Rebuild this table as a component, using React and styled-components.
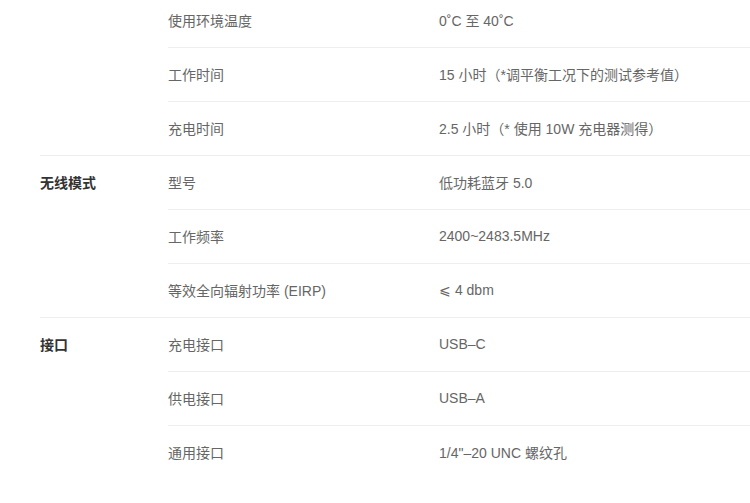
import styled, { createGlobalStyle } from 'styled-components';

const GlobalStyle = createGlobalStyle`
  html, body {
    margin: 0;
    padding: 0;
    background: #fff;
  }
  body {
    font-family: "Liberation Sans", "Noto Sans CJK SC", sans-serif;
    overflow: hidden;
  }
`;

const SpecTable = styled.div`
  margin-top: -6px;
  padding-left: 40px;
`;

const Group = styled.section`
  display: grid;
  grid-template-columns: 128px 1fr;
  border-bottom: ${p => (p.$last ? 'none' : '1px solid #eeeeee')};
`;

const GroupTitle = styled.h3`
  margin: 0;
  height: 53px;
  padding-bottom: 2px;
  box-sizing: border-box;
  display: flex;
  align-items: center;
  font-size: 14px;
  font-weight: 700;
  color: #333;
`;

const Items = styled.div`
  display: flex;
  flex-direction: column;
`;

const Item = styled.div`
  display: grid;
  grid-template-columns: 271px 1fr;
  align-items: center;
  height: 53px;
  padding-bottom: 2px;
  box-sizing: border-box;
  font-size: 14px;
  color: #666;
  & + & {
    border-top: 1px solid #eeeeee;
    height: 54px;
  }
`;

const Name = styled.span``;
const Value = styled.span``;

const groups = [
  {
    title: '',
    items: [
      ['使用环境温度', '0˚C 至 40˚C'],
      ['工作时间', '15 小时（*调平衡工况下的测试参考值）'],
      ['充电时间', '2.5 小时（* 使用 10W 充电器测得）'],
    ],
  },
  {
    title: '无线模式',
    items: [
      ['型号', '低功耗蓝牙 5.0'],
      ['工作频率', '2400~2483.5MHz'],
      ['等效全向辐射功率 (EIRP)', '⩽ 4 dbm'],
    ],
  },
  {
    title: '接口',
    items: [
      ['充电接口', 'USB–C'],
      ['供电接口', 'USB–A'],
      ['通用接口', '1/4"–20 UNC 螺纹孔'],
    ],
  },
];

export default function App() {
  return (
    <>
      <GlobalStyle />
      <SpecTable>
        {groups.map((g, i) => (
          <Group key={i} $last={i === groups.length - 1}>
            <GroupTitle>{g.title}</GroupTitle>
            <Items>
              {g.items.map(([name, value]) => (
                <Item key={name}>
                  <Name>{name}</Name>
                  <Value>{value}</Value>
                </Item>
              ))}
            </Items>
          </Group>
        ))}
      </SpecTable>
    </>
  );
}
